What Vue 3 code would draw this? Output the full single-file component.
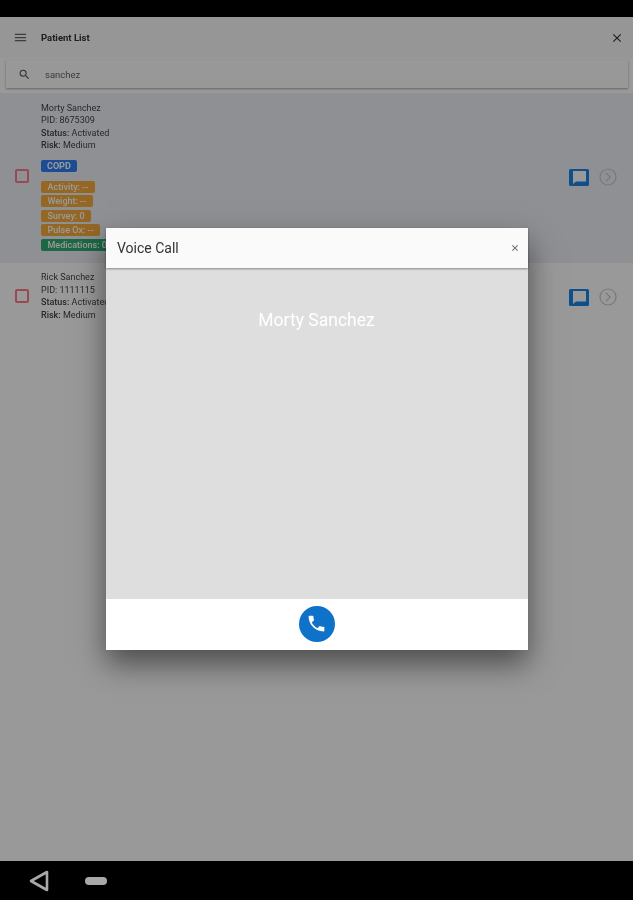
<template>
  <div class="screen">
    <div class="status-bar"></div>

    <div class="content">
      <header class="toolbar">
        <svg class="menu-icon" viewBox="0 0 24 24"><path d="M3 6h18v2H3zM3 11h18v2H3zM3 16h18v2H3z" /></svg>
        <span class="toolbar-title">Patient List</span>
        <svg class="close-icon" viewBox="0 0 24 24"><path d="M19 6.4 17.6 5 12 10.6 6.4 5 5 6.4 10.6 12 5 17.6 6.4 19 12 13.4 17.6 19 19 17.6 13.4 12z" /></svg>
      </header>

      <div class="search">
        <svg class="search-icon" viewBox="0 0 24 24"><path d="M15.5 14h-.79l-.28-.27A6.47 6.47 0 0 0 16 9.5 6.5 6.5 0 1 0 9.5 16c1.61 0 3.09-.59 4.23-1.57l.27.28v.79l5 4.99L20.49 19l-4.99-5zm-6 0C7.01 14 5 11.99 5 9.5S7.01 5 9.500 5 14 7.01 14 9.500 11.990 14 9.500 14z" /></svg>
        <span class="search-text">sanchez</span>
      </div>

      <div class="patients">
        <div v-for="p in patients" :key="p.pid" class="patient" :class="{ selected: p.selected }">
          <div class="checkbox"></div>
          <div class="patient-body">
            <div class="line">{{ p.name }}</div>
            <div class="line">PID: {{ p.pid }}</div>
            <div class="line"><b>Status:</b> {{ p.status }}</div>
            <div class="line"><b>Risk:</b> {{ p.risk }}</div>
            <template v-if="p.selected">
              <span class="condition">COPD</span>
              <div class="tags">
                <span v-for="t in p.tags" :key="t.label" class="tag" :class="t.color">{{ t.label }}</span>
              </div>
            </template>
          </div>
          <div class="actions">
            <svg class="chat-icon" viewBox="0 0 20 17">
              <rect width="20" height="17" rx="1.5" fill="#1a84e6" />
              <path d="M4 2h13v10.500H7L4 15z" fill="#fff" />
            </svg>
            <svg class="arrow-icon" viewBox="0 0 18 18" fill="none" stroke="#c8c8cc" stroke-width="1.2">
              <circle cx="9" cy="9" r="8" />
              <path d="M7 4.8 11.2 9 7 13.2" />
            </svg>
          </div>
        </div>
      </div>

      <div class="backdrop">
        <div class="modal">
          <div class="modal-head">
            <span class="modal-title">Voice Call</span>
            <svg class="modal-close" viewBox="0 0 24 24"><path d="M19 6.4 17.6 5 12 10.6 6.4 5 5 6.4 10.6 12 5 17.6 6.4 19 12 13.4 17.6 19 19 17.6 13.4 12z" /></svg>
          </div>
          <div class="modal-body">Morty Sanchez</div>
          <div class="modal-foot">
            <div class="call-btn">
              <svg viewBox="0 0 24 24"><path d="M6.6 10.8c1.4 2.8 3.8 5.1 6.6 6.6l2.2-2.2c.3-.3.7-.4 1-.2 1.100.4 2.300.6 3.600.6.600 0 1 .4 1 1V20c0 .6-.4 1-1 1C10.600 21 3 13.400 3 4c0-.6.400-1 1-1h3.500c.6 0 1 .4 1 1 0 1.300.2 2.500.6 3.600.1.300 0 .7-.2 1l-2.300 2.200z" /></svg>
            </div>
          </div>
        </div>
      </div>
    </div>

    <div class="nav-bar">
      <svg class="nav-back" viewBox="0 0 22 24" fill="none" stroke="#a8a8a8" stroke-width="2.600" stroke-linejoin="round"><path d="M19 3v18L3 12z" /></svg>
      <div class="nav-home"></div>
    </div>
  </div>
</template>

<script setup>
const patients = [
  {
    name: 'Morty Sanchez',
    pid: '8675309',
    status: 'Activated',
    risk: 'Medium',
    selected: true,
    tags: [
      { label: 'Activity: --', color: 'orange' },
      { label: 'Weight: --', color: 'orange' },
      { label: 'Survey: 0', color: 'orange' },
      { label: 'Pulse Ox: --', color: 'orange' },
      { label: 'Medications: 0', color: 'green' }
    ]
  },
  {
    name: 'Rick Sanchez',
    pid: '1111115',
    status: 'Activated',
    risk: 'Medium',
    selected: false
  }
];
</script>

<style>
body {
  margin: 0;
  background: #000;
}
</style>

<style scoped>
.screen {
  width: 633px;
  height: 900px;
  display: flex;
  flex-direction: column;
  overflow: hidden;
  font-family: Roboto, "Liberation Sans", sans-serif;
  color: #1e1e1e;
}

.status-bar {
  height: 17px;
  background: #000;
  flex-shrink: 0;
}

.content {
  position: relative;
  flex: 1;
  background: #fff;
  filter: blur(0.6px);
}

.toolbar {
  height: 41px;
  display: flex;
  align-items: center;
  padding: 0 9px 0 13px;
  background: #fafafa;
}

.menu-icon {
  width: 15px;
  height: 15px;
  fill: #666;
}

.toolbar-title {
  margin-left: 13px;
  font-size: 9.500px;
  font-weight: 700;
  color: #333;
  flex: 1;
}

.close-icon {
  width: 14px;
  height: 14px;
  fill: #333;
}

.search {
  height: 28px;
  margin: 2px 5px 0 6px;
  display: flex;
  align-items: center;
  padding-left: 12px;
  background: #fdfdfd;
  box-shadow: 0 1px 2px rgba(0, 0, 0, 0.35);
}

.search-icon {
  width: 13px;
  height: 13px;
  fill: #555;
}

.search-text {
  margin-left: 14px;
  font-size: 9.500px;
  color: #666;
}

.patients {
  margin-top: 5px;
}

.patient {
  display: flex;
  align-items: center;
  padding: 8.500px 16px 12px 15px;
}

.patient.selected {
  background: #eef0f5;
}

.checkbox {
  box-sizing: border-box;
  width: 14px;
  height: 14px;
  border: 2px solid #ff7a8a;
  border-radius: 2px;
  flex-shrink: 0;
}

.patient-body {
  flex: 1;
  margin-left: 12px;
  font-size: 9px;
  line-height: 12.500px;
  color: #444;
}

.patient-body b {
  font-weight: 500;
}

.condition {
  display: inline-block;
  margin-top: 8px;
  padding: 0 6px;
  height: 12px;
  line-height: 12px;
  font-size: 9px;
  font-weight: 700;
  border-radius: 2px;
  color: #fff;
  background: #2f7ff5;
}

.tags {
  margin-top: 8.500px;
  display: flex;
  flex-direction: column;
  align-items: flex-start;
  gap: 2.500px;
}

.tag {
  height: 12px;
  line-height: 12px;
  padding: 0 6.500px;
  font-size: 9px;
  font-weight: 500;
  border-radius: 2px;
  color: #fff;
}

.orange {
  background: #f9ac3f;
}

.green {
  background: #2fae74;
}

.actions {
  display: flex;
  align-items: center;
  gap: 10px;
  margin-top: 2px;
}

.chat-icon {
  width: 20px;
  height: 17px;
}

.arrow-icon {
  width: 18px;
  height: 18px;
}

.backdrop {
  position: absolute;
  inset: 0;
  background: rgba(0, 0, 0, 0.4);
  display: flex;
  align-items: center;
  justify-content: center;
}

.modal {
  width: 422px;
  height: 422px;
  display: flex;
  flex-direction: column;
  background: #fff;
  box-shadow: 0 14px 28px rgba(0, 0, 0, 0.5);
}

.modal-head {
  height: 40px;
  display: flex;
  align-items: center;
  justify-content: space-between;
  padding: 0 8px 0 11.500px;
  background: #fafafa;
  box-shadow: 0 1px 2px rgba(0, 0, 0, 0.4);
  position: relative;
}

.modal-title {
  font-size: 14px;
  color: #333;
}

.modal-close {
  width: 10px;
  height: 10px;
  fill: #555;
}

.modal-body {
  height: 331px;
  box-sizing: border-box;
  padding-top: 41px;
  background: #dedede;
  text-align: center;
  font-size: 17.500px;
  line-height: 22px;
  color: #fff;
}

.modal-foot {
  flex: 1;
  display: flex;
  align-items: center;
  justify-content: center;
  padding-bottom: 2px;
  background: #fff;
}

.call-btn {
  width: 36px;
  height: 36px;
  border-radius: 50%;
  background: #0f72c9;
  display: flex;
  align-items: center;
  justify-content: center;
}

.call-btn svg {
  width: 21px;
  height: 21px;
  fill: #fff;
}

.nav-bar {
  height: 39px;
  flex-shrink: 0;
  background: #000;
  display: flex;
  align-items: center;
  padding-left: 28px;
}

.nav-back {
  width: 22px;
  height: 24px;
}

.nav-home {
  width: 22px;
  height: 8px;
  margin-left: 35px;
  border-radius: 4px;
  background: #a8a8a8;
}
</style>
